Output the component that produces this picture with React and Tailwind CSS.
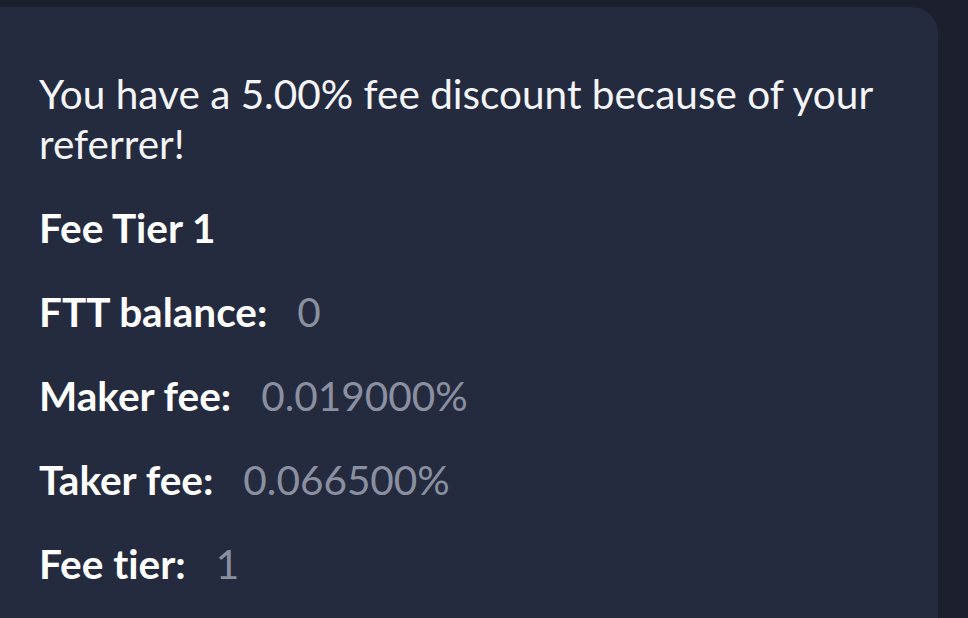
export default function App() {
  const rows = [
    ["FTT balance:", "0"],
    ["Maker fee:", "0.019000%"],
    ["Taker fee:", "0.066500%"],
    ["Fee tier:", "1"],
  ];
  return (
    <div className="w-[968px] h-[618px] overflow-hidden bg-[#1b1f2e] pt-[7px] pr-[30px] [font-variant-ligatures:none]" style={{ fontFamily: "Lato, 'Noto Sans', sans-serif" }}>
      <div className="h-[700px] bg-[#252b3e] rounded-tr-[26px] pl-[39px] pt-[62px]">
        <p className="text-[40.5px] leading-[50px] text-[#f4f5f8] w-[880px]">
          You have a 5.00% fee discount because of your referrer!
        </p>
        <div className="mt-[34px] text-[40.5px] leading-[50px] font-bold text-white">Fee Tier 1</div>
        <div className="flex flex-col gap-[34px] mt-[34px]">
          {rows.map(([k, v]) => (
            <div key={k} className="flex items-baseline gap-[30px] text-[40.5px] leading-[50px]">
              <span className="font-bold text-white">{k}</span>
              <span className="text-[#8b90a1]">{v}</span>
            </div>
          ))}
        </div>
      </div>
    </div>
  );
}
